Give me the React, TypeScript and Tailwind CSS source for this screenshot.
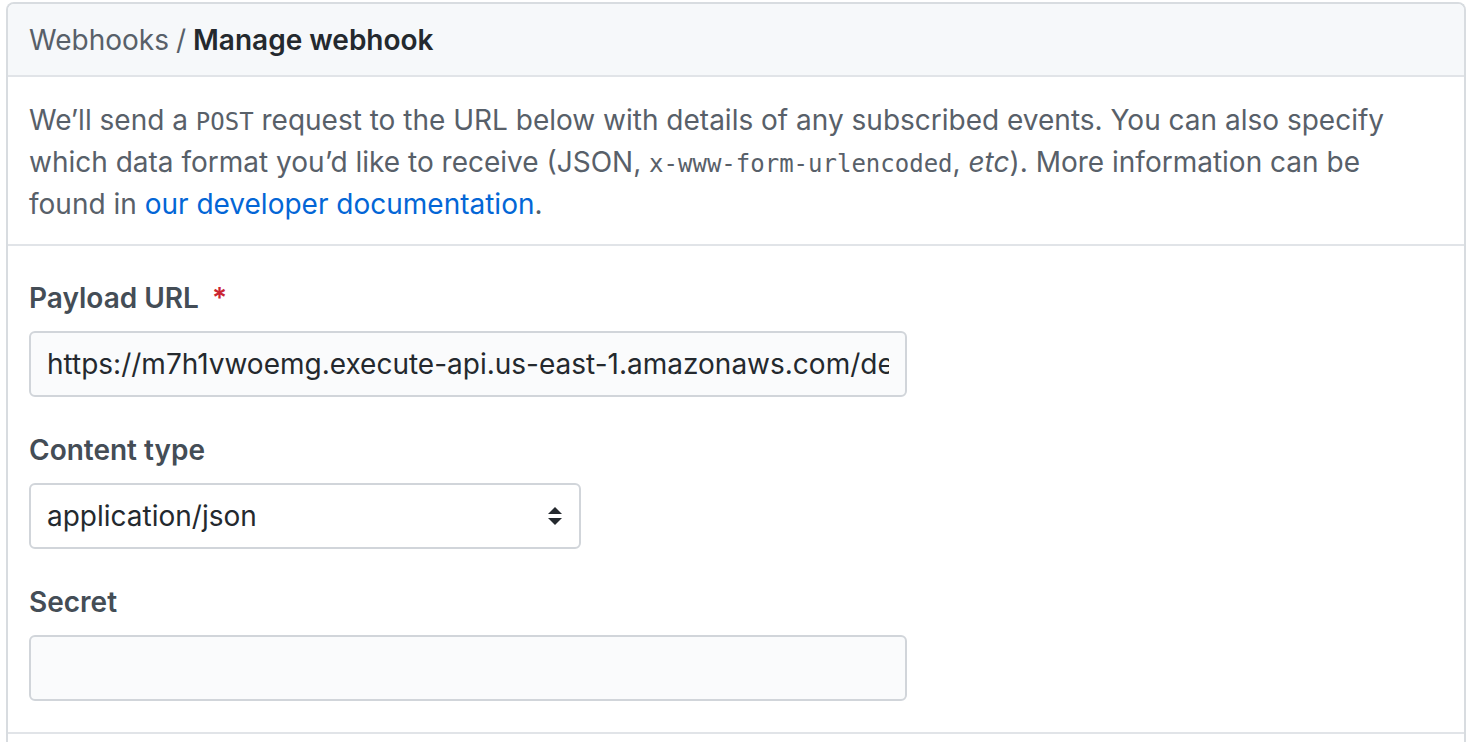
import React, { useState } from 'react'

export default function App() {
    const [payloadUrl, setPayloadUrl] = useState('https://m7h1vwoemg.execute-api.us-east-1.amazonaws.com/dev/webhook')
    const [contentType, setContentType] = useState('json')
    const [secret, setSecret] = useState('')

    return (
        <div className=" min-h-[742px] bg-white pl-[6px] pr-[4px] pt-[2px] " style={{ fontFamily: 'Inter, "Liberation Sans", sans-serif' }}>
            <div className=" rounded-t-[8px] border-2 border-b-0 border-[#d8dce0] ">
                <div className=" flex h-[73px] items-center rounded-t-[6px] border-b-2 border-[#e1e4e8] bg-[#f6f8fa] px-[21px] text-[28px] ">
                    <span className=" text-[#586069] ">Webhooks</span>
                    <span className=" mx-[7px] text-[#586069] ">/</span>
                    <span className=" font-semibold text-[#24292e] ">Manage webhook</span>
                </div>

                <p className=" border-b-2 border-[#e1e4e8] px-[21px] pt-[22px] pb-[19px] text-[28px] leading-[42px] text-[#586069] ">
                    We’ll send a <code className=" text-[24px] leading-none " style={{ fontFamily: '"DejaVu Sans Mono", monospace' }}>POST</code> request to the URL below with details of any subscribed events. You can also specify
                    <br />
                    which data format you’d like to receive (JSON, <code className=" text-[24px] leading-none " style={{ fontFamily: '"DejaVu Sans Mono", monospace' }}>x-www-form-urlencoded</code>, <em>etc</em>). More information can be
                    <br />
                    found in <a href="#" className=" text-[#0366d6] ">our developer documentation</a>.
                </p>

                <form className=" flex flex-col gap-[37px] border-b-2 border-[#e1e4e8] px-[21px] pt-[36px] pb-[31px] " onSubmit={e => e.preventDefault()}>
                    <div className=" flex flex-col ">
                        <label className=" mb-[17px] text-[28px] font-semibold leading-[32px] text-[#444d56] ">
                            Payload URL <span className=" ml-[6px] text-[#cb2431] ">*</span>
                        </label>
                        <input
                            type="text"
                            value={payloadUrl}
                            onChange={e => setPayloadUrl(e.target.value)}
                            className=" h-[66px] w-[878px] rounded-[6px] border-2 border-[#d1d5da] bg-[#fafbfc] px-[16px] text-[28px] text-[#24292e] outline-none "
                        />
                    </div>

                    <div className=" flex flex-col ">
                        <label className=" mb-[17px] text-[28px] font-semibold leading-[32px] text-[#444d56] ">Content type</label>
                        <div className=" relative w-[552px] ">
                            <select
                                value={contentType}
                                onChange={e => setContentType(e.target.value)}
                                className=" h-[66px] w-full appearance-none rounded-[6px] border-2 border-[#d1d5da] bg-white px-[16px] text-[28px] text-[#24292e] outline-none "
                            >
                                <option value="json">application/json</option>
                                <option value="form">application/x-www-form-urlencoded</option>
                            </select>
                            <svg className=" pointer-events-none absolute right-[18px] top-[21px] " width="16" height="24" viewBox="0 0 16 24">
                                <path d="M8 3 L15 10 L1 10 Z" fill="#24292e" />
                                <path d="M8 21 L15 14 L1 14 Z" fill="#24292e" />
                            </svg>
                        </div>
                    </div>

                    <div className=" flex flex-col ">
                        <label className=" mb-[17px] text-[28px] font-semibold leading-[32px] text-[#444d56] ">Secret</label>
                        <input
                            type="password"
                            value={secret}
                            onChange={e => setSecret(e.target.value)}
                            className=" h-[66px] w-[878px] rounded-[6px] border-2 border-[#d1d5da] bg-[#fafbfc] px-[16px] text-[28px] text-[#24292e] outline-none "
                        />
                    </div>
                </form>
                <div className=" h-[20px] " />
            </div>
        </div>
    )
}
